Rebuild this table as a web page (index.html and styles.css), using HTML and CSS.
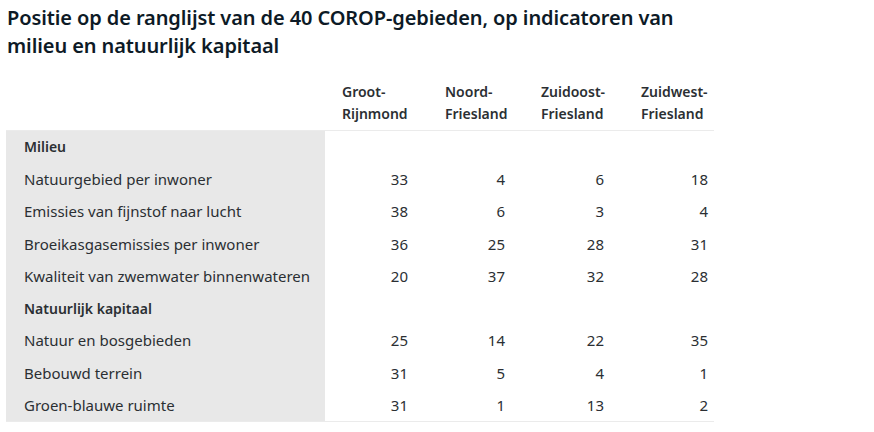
FILE: index.html
```html
<!DOCTYPE html>
<html lang="nl">
<head>
<meta charset="utf-8">
<link rel="stylesheet" href="styles.css">
</head>
<body>
<h1 class="title">Positie op de ranglijst van de 40 COROP-gebieden, op indicatoren van milieu en natuurlijk kapitaal</h1>
<table class="rank">
  <colgroup>
    <col class="c1"><col class="c2"><col class="c3"><col class="c4"><col class="c5">
  </colgroup>
  <thead>
    <tr>
      <th class="blank"></th>
      <th class="h2">Groot-<br>Rijnmond</th>
      <th class="h3">Noord-<br>Friesland</th>
      <th class="h4">Zuidoost-<br>Friesland</th>
      <th class="h5">Zuidwest-<br>Friesland</th>
    </tr>
  </thead>
  <tbody>
    <tr class="group"><th class="label strong">Milieu</th><td></td><td></td><td></td><td></td></tr>
    <tr><th class="label">Natuurgebied per inwoner</th><td>33</td><td>4</td><td>6</td><td>18</td></tr>
    <tr><th class="label">Emissies van fijnstof naar lucht</th><td>38</td><td>6</td><td>3</td><td>4</td></tr>
    <tr><th class="label">Broeikasgasemissies per inwoner</th><td>36</td><td>25</td><td>28</td><td>31</td></tr>
    <tr><th class="label">Kwaliteit van zwemwater binnenwateren</th><td>20</td><td>37</td><td>32</td><td>28</td></tr>
    <tr class="group"><th class="label strong">Natuurlijk kapitaal</th><td></td><td></td><td></td><td></td></tr>
    <tr><th class="label">Natuur en bosgebieden</th><td>25</td><td>14</td><td>22</td><td>35</td></tr>
    <tr><th class="label">Bebouwd terrein</th><td>31</td><td>5</td><td>4</td><td>1</td></tr>
    <tr><th class="label">Groen-blauwe ruimte</th><td>31</td><td>1</td><td>13</td><td>2</td></tr>
  </tbody>
</table>
</body>
</html>
```
FILE: styles.css
```css
html, body {
  margin: 0;
  padding: 0;
  background: #fff;
}
body {
  font-family: "Noto Sans", "Liberation Sans", sans-serif;
  color: #2b2f33;
  padding: 4px 0 0 7px;
}
.title {
  margin: 0;
  font-size: 20px;
  line-height: 28px;
  font-weight: 600;
  color: #0d1a26;
  width: 700px;
  letter-spacing: -0.1px;
}
.rank {
  border-collapse: collapse;
  table-layout: fixed;
  width: 708px;
  margin: 21px 0 0 -1px;
  font-size: 15px;
}
.c1 { width: 319px; }
.c2 { width: 89px; }
.c3 { width: 97px; }
.c4 { width: 99px; }
.c5 { width: 104px; }
thead th {
  text-align: left;
  font-size: 14px;
  font-weight: 600;
  line-height: 22px;
  padding: 0 0 5px 0;
  vertical-align: bottom;
  border-bottom: 1px solid #ebebeb;
}
.h2 { padding-left: 17px; }
.h3 { padding-left: 31px; }
.h4 { padding-left: 30px; }
.h5 { padding-left: 31px; }
tbody tr {
  height: 32.3px;
}
tbody tr:last-child td, tbody tr:last-child th {
  border-bottom: 1px solid #ebebeb;
}
.label {
  background: #e8e8e8;
  text-align: left;
  font-weight: 400;
  padding: 0 0 0 18px;
  white-space: nowrap;
}
.label.strong {
  font-weight: 600;
  font-size: 14px;
}
tbody td {
  text-align: right;
  padding: 0 6px 0 0;
}
```
